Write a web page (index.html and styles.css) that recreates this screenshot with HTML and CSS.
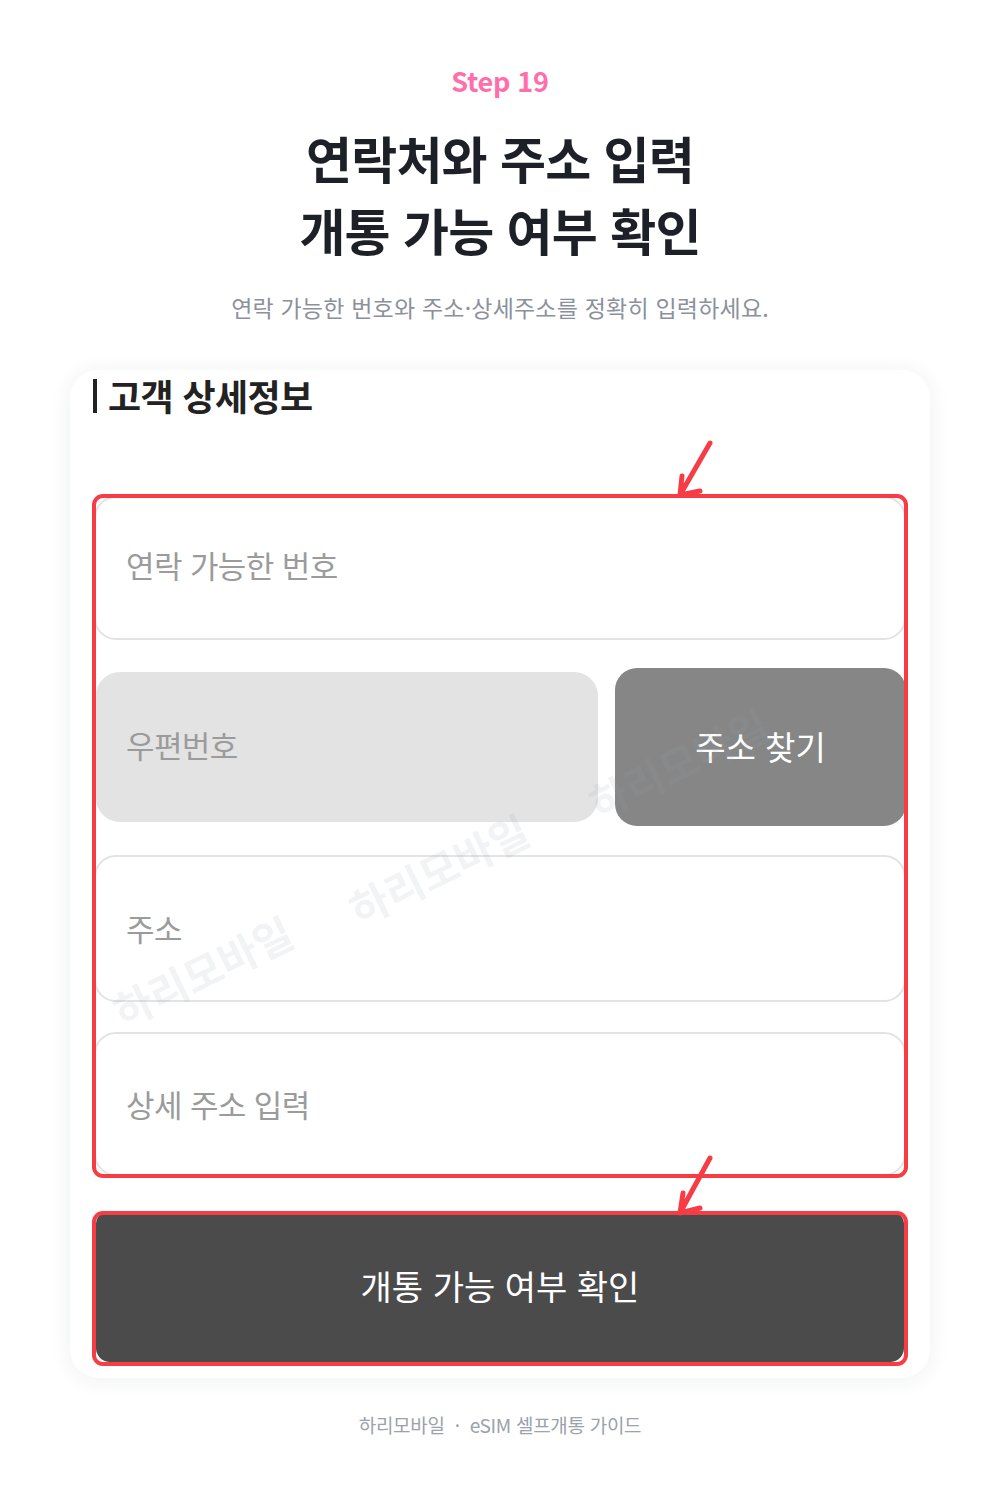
FILE: index.html
```html
<!DOCTYPE html>
<html lang="ko">
<head>
<meta charset="utf-8">
<title>Step 19</title>
<link rel="stylesheet" href="styles.css">
</head>
<body>
<div class="page">
  <header class="hero">
    <div class="step">Step 19</div>
    <h1 class="title">연락처와 주소 입력<br>개통 가능 여부 확인</h1>
    <p class="subtitle">연락 가능한 번호와 주소·상세주소를 정확히 입력하세요.</p>
  </header>

  <section class="card">
    <h2 class="card-title"><span class="bar"></span>고객 상세정보</h2>

    <div class="group highlight">
      <div class="field phone"><span class="ph">연락 가능한 번호</span></div>
      <div class="zip-row">
        <div class="field zip"><span class="ph">우편번호</span></div>
        <button class="find" type="button">주소 찾기</button>
      </div>
      <div class="field addr"><span class="ph">주소</span></div>
      <div class="field detail"><span class="ph">상세 주소 입력</span></div>
    </div>

    <div class="submit-wrap highlight">
      <button class="submit" type="button">개통 가능 여부 확인</button>
    </div>

    <div class="wm wm1">하리모바일</div>
    <div class="wm wm2">하리모바일</div>
    <div class="wm wm3">하리모바일</div>

    <svg class="arrow arrow-1" width="60" height="75" viewBox="0 0 60 75">
      <path d="M40 13 L10 65 M10 65 L12 46 M10 65 L30 61" />
    </svg>
    <svg class="arrow arrow-2" width="60" height="75" viewBox="0 0 60 75">
      <path d="M40 10 L10 65 M10 65 L13 45 M10 65 L30 60" />
    </svg>
  </section>

  <footer class="footer">하리모바일 &nbsp;·&nbsp; eSIM 셀프개통 가이드</footer>
</div>
</body>
</html>
```

FILE: styles.css
```css
html, body {
  margin: 0;
  padding: 0;
  background: #ffffff;
}

body {
  font-family: "Noto Sans CJK KR", "Noto Sans", sans-serif;
  color: #1d2127;
}

.page {
  width: 1000px;
  padding-top: 65px;
}

.hero {
  text-align: center;
}

.step {
  font-size: 27px;
  line-height: 32px;
  font-weight: 700;
  color: #ff6ea9;
  letter-spacing: -0.3px;
}

.title {
  margin: 24px 0 0;
  font-size: 50px;
  line-height: 72px;
  font-weight: 700;
  color: #1d2127;
  letter-spacing: -0.8px;
}

.subtitle {
  margin: 27px 0 0;
  font-size: 23px;
  line-height: 30px;
  color: #8b919b;
  letter-spacing: 0.2px;
}

.card {
  position: relative;
  margin: 48px 70px 0;
  padding: 0 22px 12px;
  background: #ffffff;
  border-radius: 28px;
  box-shadow: 0 2px 22px rgba(30, 40, 60, 0.07);
  overflow: hidden;
}

.card-title {
  display: flex;
  align-items: center;
  margin: 0;
  height: 50px;
  font-size: 36px;
  line-height: 46px;
  font-weight: 700;
  color: #222222;
  letter-spacing: -0.6px;
}

.bar {
  display: inline-block;
  width: 4px;
  height: 34px;
  margin: 2px 11px 0 1px;
  background: #222222;
}

.highlight {
  position: relative;
}

.highlight::after {
  content: "";
  position: absolute;
  inset: 0;
  border: 4px solid #f73c45;
  border-radius: 11px;
  z-index: 3;
  pointer-events: none;
}

.group {
  margin-top: 74px;
  padding: 2px 2px;
  display: flex;
  flex-direction: column;
}

.field {
  display: flex;
  align-items: center;
  height: 144px;
  box-sizing: border-box;
  padding-left: 30px;
  padding-bottom: 3px;
  border: 2px solid #e3e3e3;
  border-radius: 22px;
  background: #ffffff;
}

.field.phone {
  padding-bottom: 8px;
}

.ph {
  font-size: 31px;
  color: #9b9b9b;
  letter-spacing: -0.6px;
}

.zip-row {
  display: grid;
  grid-template-columns: 1fr 291px;
  column-gap: 17px;
  align-items: center;
  height: 158px;
  margin-top: 28px;
  padding-left: 2px;
}

.field.zip {
  height: 150px;
  border-color: #e3e3e3;
  background: #e3e3e3;
  border-radius: 24px;
  padding-left: 28px;
  padding-bottom: 5px;
}

.find {
  height: 158px;
  padding-bottom: 4px;
  border: none;
  border-radius: 22px;
  background: #868686;
  color: #ffffff;
  font-family: inherit;
  font-size: 33px;
  letter-spacing: 0;
}

.field.addr {
  margin-top: 29px;
  height: 147px;
}

.field.detail {
  margin-top: 30px;
  padding-bottom: 1px;
}

.submit-wrap {
  margin-top: 33px;
  padding: 2px 4px 4px;
}

.submit {
  display: block;
  width: 100%;
  height: 149px;
  padding-bottom: 6px;
  border: none;
  border-radius: 10px 10px 14px 14px;
  background: #4b4b4b;
  color: #ffffff;
  font-family: inherit;
  font-size: 34px;
  letter-spacing: 0;
}

.wm {
  position: absolute;
  transform: translate(-50%, -50%) rotate(-26deg);
  font-size: 42px;
  font-weight: 700;
  color: rgba(150, 160, 175, 0.13);
  white-space: nowrap;
  z-index: 2;
  pointer-events: none;
}

.wm1 { left: 132px; top: 600px; }
.wm2 { left: 368px; top: 498px; }
.wm3 { left: 608px; top: 392px; }

.arrow {
  position: absolute;
  z-index: 4;
  overflow: visible;
}

.arrow path {
  fill: none;
  stroke: #f73c45;
  stroke-width: 5;
  stroke-linecap: round;
  stroke-linejoin: round;
}

.arrow-1 { left: 600px; top: 60px; }
.arrow-2 { left: 600px; top: 778px; }

.footer {
  margin-top: 33px;
  text-align: center;
  font-size: 19px;
  line-height: 28px;
  color: #9ca1ab;
  letter-spacing: -0.3px;
}
```
